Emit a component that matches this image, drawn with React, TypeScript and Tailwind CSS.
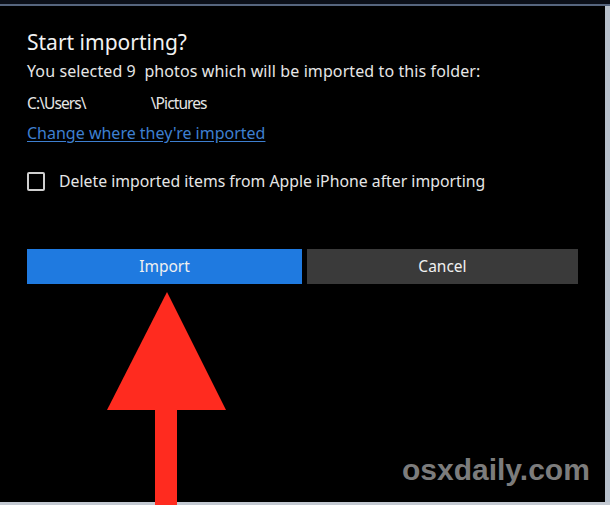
import React from "react";

function UpArrow() {
  return (
    <svg className="absolute left-[105px] top-[290px]" width="124" height="215" viewBox="0 0 124 215">
      <polygon points="62,2 121,120 2,120" fill="#ff2b1f" />
      <rect x="50" y="119" width="22" height="96" fill="#ff2b1f" />
    </svg>
  );
}

export default function App() {
  return (
    <div className="relative w-[610px] h-[505px] overflow-hidden bg-black flex flex-col font-['Noto_Sans','Open_Sans',sans-serif]">
      <div className="h-[4px] bg-[#0b0f18]" />
      <div className="h-[2px] bg-[#56657e]" />
      <div className="flex flex-1 min-h-0">
        <div className="flex-1 bg-black flex flex-col pl-[27px] pr-[27px] pt-[22px]">
          <h1 className="text-[21px] leading-[28px] text-[#f2f2f2]">Start importing?</h1>
          <p className="mt-[4px] text-[16px] leading-[22px] tracking-[0.1px] text-[#e6e6e6]">
            You selected 9&nbsp; photos which will be imported to this folder:
          </p>
          <p className="mt-[10px] text-[15.5px] leading-[22px] tracking-[-0.9px] text-[#e6e6e6]">
            C:\Users\<span className="inline-block w-[65px]" />\Pictures
          </p>
          <a className="mt-[8px] self-start text-[16px] leading-[22px] text-[#3e7fd0] underline underline-offset-2">
            Change where they're imported
          </a>
          <label className="mt-[26px] flex items-center gap-[14px]">
            <span className="w-[18px] h-[19px] border-2 border-[#cfcfcf] rounded-[2px]" />
            <span className="text-[15.8px] leading-[22px] text-[#e6e6e6]">
              Delete imported items from Apple iPhone after importing
            </span>
          </label>
          <div className="mt-[57px] flex gap-[5px]">
            <button className="w-[275px] h-[35px] bg-[#1f7ae0] text-[15.5px] text-[#f0f0f0]">Import</button>
            <button className="w-[271px] h-[35px] bg-[#3a3a3a] text-[15.5px] text-[#f0f0f0]">Cancel</button>
          </div>
        </div>
        <div className="w-[6px] bg-[#b9c2cd]" />
      </div>
      <div className="h-[3px] bg-[#c3c9d2]" />
      <UpArrow />
      <span className="absolute left-[402px] top-[453px] text-[30px] leading-[34px] font-bold text-[#7c7c7c] font-['Liberation_Sans',Arial,sans-serif]">
        osxdaily.com
      </span>
    </div>
  );
}
